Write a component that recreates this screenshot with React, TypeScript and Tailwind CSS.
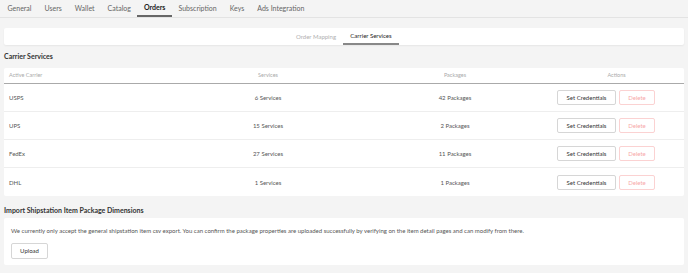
import React from "react";

const tabs = ["General", "Users", "Wallet", "Catalog", "Orders", "Subscription", "Keys", "Ads Integration"];

const carriers = [
  { name: "USPS", services: 6, packages: 42 },
  { name: "UPS", services: 15, packages: 2 },
  { name: "FedEx", services: 27, packages: 11 },
  { name: "DHL", services: 1, packages: 1 },
];

const App = () => {
  return (
    <div
      className="w-[688px] h-[273px] bg-[#f4f4f4] text-[#555] overflow-hidden"
      style={{ fontFamily: "Lato, 'Open Sans', sans-serif" }}
    >
      {/* top nav */}
      <div className="flex h-[18px] items-end px-[1px] border-b border-[#e3e3e3]">
        {tabs.map((t) => (
          <div
            key={t}
            className={
              t === "Orders"
                ? "px-[6.5px] h-[18px] flex items-center text-[7px] font-bold text-[#222] border-b-2 border-[#666]"
                : "px-[6.5px] h-[18px] flex items-center text-[7px] text-[#666]"
            }
          >
            {t}
          </div>
        ))}
      </div>

      <div className="px-[4px]">
        {/* sub tabs */}
        <div className="mt-[10px] h-[17px] bg-white rounded-[2px] shadow-[0_1px_2px_rgba(0,0,0,0.06)] flex justify-center">
          <div className="w-[54px] flex items-center justify-center text-[6px] text-[#b0b0b0]">Order Mapping</div>
          <div className="w-[56px] flex items-center justify-center text-[6px] text-[#222] border-b-2 border-[#888]">
            Carrier Services
          </div>
        </div>

        <div className="h-[23px] flex items-center text-[7px] font-bold text-[#333]">Carrier Services</div>

        {/* table */}
        <div className="bg-white rounded-[2px]">
          <div className="grid grid-cols-[171px_186px_188px_135px] h-[16px] items-center text-[5.5px] text-[#aaa] border-b border-[#aaa]">
            <div className="pl-[5px]">Active Carrier</div>
            <div className="text-center">Services</div>
            <div className="text-center">Packages</div>
            <div className="text-center">Actions</div>
          </div>
          {carriers.map((c, i) => (
            <div
              key={c.name}
              className={
                i < carriers.length - 1
                  ? "grid grid-cols-[171px_186px_188px_135px] h-[28px] items-center text-[6px] text-[#555] border-b border-[#eeeeee]"
                  : "grid grid-cols-[171px_186px_188px_135px] h-[28px] items-center text-[6px] text-[#555]"
              }
            >
              <div className="pl-[5px]">{c.name}</div>
              <div className="text-center">{c.services} Services</div>
              <div className="text-center">{c.packages} Packages</div>
              <div className="flex gap-[3px] pl-[8px]">
                <button className="w-[59px] h-[15px] border border-[#d6d6d6] rounded-[2px] text-[6px] text-[#333] bg-white">
                  Set Credentials
                </button>
                <button className="w-[36px] h-[15px] border border-[#fbd2d2] rounded-[2px] text-[6px] text-[#f7a8a8] bg-white">
                  Delete
                </button>
              </div>
            </div>
          ))}
        </div>

        <div className="h-[22px] flex items-end pb-[3px] text-[7px] font-bold text-[#333]">
          Import Shipstation Item Package Dimensions
        </div>

        <div className="bg-white rounded-[2px] h-[47px] px-[7px] pt-[8px]">
          <div className="text-[6px] text-[#555]">
            We currently only accept the general shipstation item csv export. You can confirm the package properties are uploaded successfully by verifying on the item detail pages and can modify from there.
          </div>
          <button className="mt-[6px] w-[37px] h-[16px] border border-[#d6d6d6] rounded-[2px] text-[6px] text-[#333] bg-white">
            Upload
          </button>
        </div>
      </div>
    </div>
  );
};

export default App;
